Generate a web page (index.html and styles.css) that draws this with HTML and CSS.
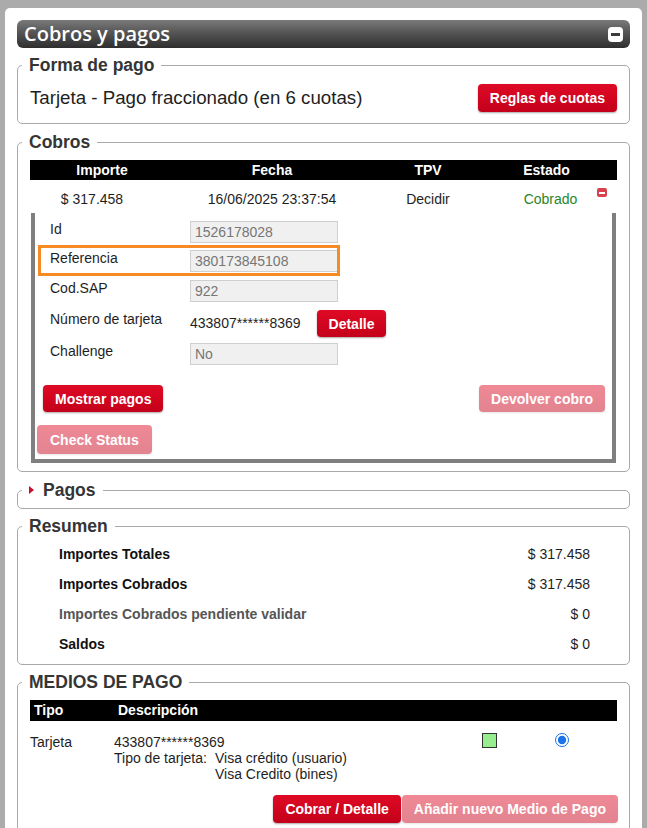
FILE: index.html
```html
<!DOCTYPE html>
<html lang="es">
<head>
<meta charset="utf-8">
<title>Cobros y pagos</title>
<link rel="stylesheet" href="styles.css">
</head>
<body>
<div class="page">
  <div class="panel-head">
    <span class="panel-title">Cobros y pagos</span>
    <span class="collapse-btn"><span class="collapse-bar"></span></span>
  </div>

  <fieldset class="box box-forma">
    <legend>Forma de pago</legend>
    <div class="forma-row">
      <span class="forma-text">Tarjeta - Pago fraccionado (en 6 cuotas)</span>
      <button class="btn">Reglas de cuotas</button>
    </div>
  </fieldset>

  <fieldset class="box box-cobros">
    <legend>Cobros</legend>
    <div class="cobros-grid cobros-head">
      <span>Importe</span><span>Fecha</span><span>TPV</span><span>Estado</span>
    </div>
    <div class="cobros-grid cobros-row">
      <span class="c-importe">$ 317.458</span>
      <span>16/06/2025 23:37:54</span>
      <span>Decidir</span>
      <span class="estado-cell"><span class="estado-ok">Cobrado</span><span class="row-remove"><span></span></span></span>
    </div>
    <div class="detail">
      <div class="field-row">
        <span class="field-label">Id</span>
        <input class="field-input" type="text" value="1526178028" readonly>
      </div>
      <div class="field-row field-hl">
        <span class="field-label">Referencia</span>
        <input class="field-input" type="text" value="380173845108" readonly>
      </div>
      <div class="field-row">
        <span class="field-label">Cod.SAP</span>
        <input class="field-input" type="text" value="922" readonly>
      </div>
      <div class="field-row field-card">
        <span class="field-label">Número de tarjeta</span>
        <span class="card-number">433807******8369</span>
        <button class="btn btn-sm">Detalle</button>
      </div>
      <div class="field-row">
        <span class="field-label">Challenge</span>
        <input class="field-input" type="text" value="No" readonly>
      </div>
      <div class="detail-actions">
        <button class="btn btn-sm">Mostrar pagos</button>
        <button class="btn btn-sm btn-disabled">Devolver cobro</button>
      </div>
      <div class="detail-actions2">
        <button class="btn btn-check btn-disabled">Check Status</button>
      </div>
    </div>
  </fieldset>

  <fieldset class="box box-pagos">
    <legend><span class="tri"></span>Pagos</legend>
  </fieldset>

  <fieldset class="box box-resumen">
    <legend>Resumen</legend>
    <div class="sum-row"><span class="sum-label">Importes Totales</span><span>$ 317.458</span></div>
    <div class="sum-row"><span class="sum-label">Importes Cobrados</span><span>$ 317.458</span></div>
    <div class="sum-row"><span class="sum-label sum-muted">Importes Cobrados pendiente validar</span><span>$ 0</span></div>
    <div class="sum-row"><span class="sum-label">Saldos</span><span>$ 0</span></div>
  </fieldset>

  <fieldset class="box box-medios">
    <legend>MEDIOS DE PAGO</legend>
    <div class="medios-grid medios-head">
      <span>Tipo</span><span>Descripción</span>
    </div>
    <div class="medios-grid medios-row">
      <span>Tarjeta</span>
      <div class="medios-desc">
        <div>433807******8369</div>
        <div class="tipo-grid">
          <span>Tipo de tarjeta:</span>
          <span>Visa crédito (usuario)<br>Visa Credito (bines)</span>
        </div>
      </div>
      <span class="cell-check"><span class="green-box"></span></span>
      <span class="cell-radio"><input class="radio" type="radio" name="medio" checked></span>
    </div>
    <div class="medios-actions">
      <button class="btn">Cobrar / Detalle</button>
      <button class="btn btn-disabled btn-wide">Añadir nuevo Medio de Pago</button>
    </div>
  </fieldset>
</div>
</body>
</html>
```

FILE: styles.css
```css
* { box-sizing: border-box; }

html, body {
  margin: 0;
  padding: 0;
}

body {
  background: #ababab;
  font-family: "Liberation Sans", Arial, sans-serif;
  font-size: 14px;
  color: #1e1e1e;
  overflow: hidden;
}

.page {
  margin: 8px 5px 0;
  padding: 12px 12px 20px;
  background: #fff;
  border-radius: 5px 5px 0 0;
  min-height: 840px;
}

/* header bar */
.panel-head {
  height: 28px;
  display: flex;
  align-items: center;
  justify-content: space-between;
  padding: 0 7px;
  border-radius: 6px;
  background: linear-gradient(#7a7a7a 0%, #555 45%, #2e2e2e 100%);
}

.panel-title {
  font-family: "Open Sans", "Liberation Sans", sans-serif;
  font-weight: 600;
  font-size: 20px;
  line-height: 28px;
  color: #fff;
}

.collapse-btn {
  width: 15px;
  height: 15px;
  border-radius: 4px;
  background: #fff;
  display: flex;
  align-items: center;
  justify-content: center;
}

.collapse-bar {
  width: 9px;
  height: 3px;
  background: #3a3a3a;
}

/* fieldsets */
.box {
  margin: 8px 0 0;
  padding: 0 12px 8px;
  border: 1px solid #a9a9a9;
  border-radius: 5px;
  min-width: 0;
}

.box legend {
  font-size: 17.5px;
  font-weight: bold;
  line-height: 20px;
  color: #353535;
  padding: 0 7px;
  margin-left: -8px;
}

.box-forma { margin-top: 7px; padding-bottom: 11px; }

.forma-row {
  margin-top: 9px;
  display: flex;
  align-items: center;
  justify-content: space-between;
}

.forma-text {
  font-size: 18.7px;
  color: #1e1e1e;
}

/* buttons */
.btn {
  font-family: "Liberation Sans", Arial, sans-serif;
  font-weight: bold;
  font-size: 14px;
  color: #fff;
  height: 28px;
  padding: 0 12px;
  border: none;
  border-radius: 4px;
  background: linear-gradient(#df0a25, #c4001a);
  box-shadow: 0 1px 2px rgba(0, 0, 0, 0.35);
  cursor: pointer;
}

.btn-sm { height: 27px; }
.btn-check { height: 29px; padding: 0 13px; }
.btn-disabled { opacity: 0.48; box-shadow: 0 1px 2px rgba(0, 0, 0, 0.2); }

/* cobros table */
.cobros-grid {
  display: grid;
  grid-template-columns: 134px 216px 96px 1fr;
  text-align: center;
}

.cobros-head {
  margin-top: 8px;
  background: #000;
  color: #fff;
  font-weight: bold;
  line-height: 20px;
}

.cobros-head span:first-child { padding-left: 10px; }

.cobros-row {
  padding: 11px 0 6px;
  line-height: 16px;
}

.c-importe { padding-right: 10px; }

.estado-cell { position: relative; }

.estado-ok {
  color: #2a862a;
  padding-left: 8px;
}

.row-remove {
  position: absolute;
  right: 10px;
  top: -3px;
  width: 10px;
  height: 9px;
  border-radius: 2px;
  background: #d8414d;
  display: flex;
  align-items: center;
  justify-content: center;
}

.row-remove span {
  width: 6px;
  height: 2px;
  background: #fff;
}

/* detail panel */
.detail {
  margin: 0 1px;
  border: 4px solid #7f7f7f;
  border-top: none;
  padding: 8px 7px 5px 2px;
}

.field-row {
  display: flex;
  align-items: flex-start;
  width: fit-content;
  margin-left: 13px;
  margin-top: 8px;
  position: relative;
}

.field-row:first-child { margin-top: 0; }
.field-hl { margin-top: 7px; }

.field-hl::before {
  content: "";
  position: absolute;
  top: -5px;
  right: -2px;
  bottom: -4px;
  left: -12px;
  border: 3px solid #f68b23;
}

.field-label {
  width: 140px;
  line-height: 16px;
  color: #1e1e1e;
}

.field-input {
  width: 148px;
  height: 22px;
  margin: 0;
  padding: 0 4px;
  border: 1px solid #cfcfcf;
  background: #f0f0f0;
  font-family: "Liberation Sans", Arial, sans-serif;
  font-size: 14px;
  color: #767676;
  outline: none;
}

.field-card .field-label { margin-top: 1px; }

.card-number {
  line-height: 27px;
  margin-right: 16px;
}

.field-card + .field-row { margin-top: 6px; }

.detail-actions {
  margin: 20px 0 0 6px;
  display: flex;
  justify-content: space-between;
}

.detail-actions2 {
  margin-top: 13px;
}

/* pagos */
.box-pagos legend {
  display: flex;
  align-items: center;
}

.tri {
  width: 0;
  height: 0;
  border-top: 4px solid transparent;
  border-bottom: 4px solid transparent;
  border-left: 5px solid #c8102e;
  margin-right: 9px;
}

/* resumen */
.box-resumen { margin-top: 7px; padding-bottom: 5px; }

.sum-row {
  display: flex;
  justify-content: space-between;
  padding: 0 27px 0 29px;
  line-height: 30px;
}

.box-resumen .sum-row:first-of-type { margin-top: 3px; }

.sum-label {
  font-weight: bold;
  color: #111;
}

.sum-muted { color: #555; }

/* medios de pago */
.box-medios { margin-top: 7px; }

.medios-grid {
  display: grid;
  grid-template-columns: 84px 368px 73px 1fr;
}

.medios-head {
  margin-top: 8px;
  background: #000;
  color: #fff;
  font-weight: bold;
  line-height: 21px;
}

.medios-head span { padding-left: 4px; }

.medios-row {
  padding-top: 13px;
  line-height: 16px;
}

.tipo-grid {
  display: grid;
  grid-template-columns: 101px auto;
}

.green-box {
  display: block;
  width: 15px;
  height: 15px;
  margin-top: -1px;
  background: #98ee8f;
  border: 1px solid #333;
}

.radio {
  margin: -2px 0 0 0;
  width: 14px;
  height: 14px;
  accent-color: #1a73e8;
}

.medios-actions {
  margin-top: 13px;
  display: flex;
  justify-content: flex-end;
  gap: 1px;
  margin-right: -1px;
}
```
